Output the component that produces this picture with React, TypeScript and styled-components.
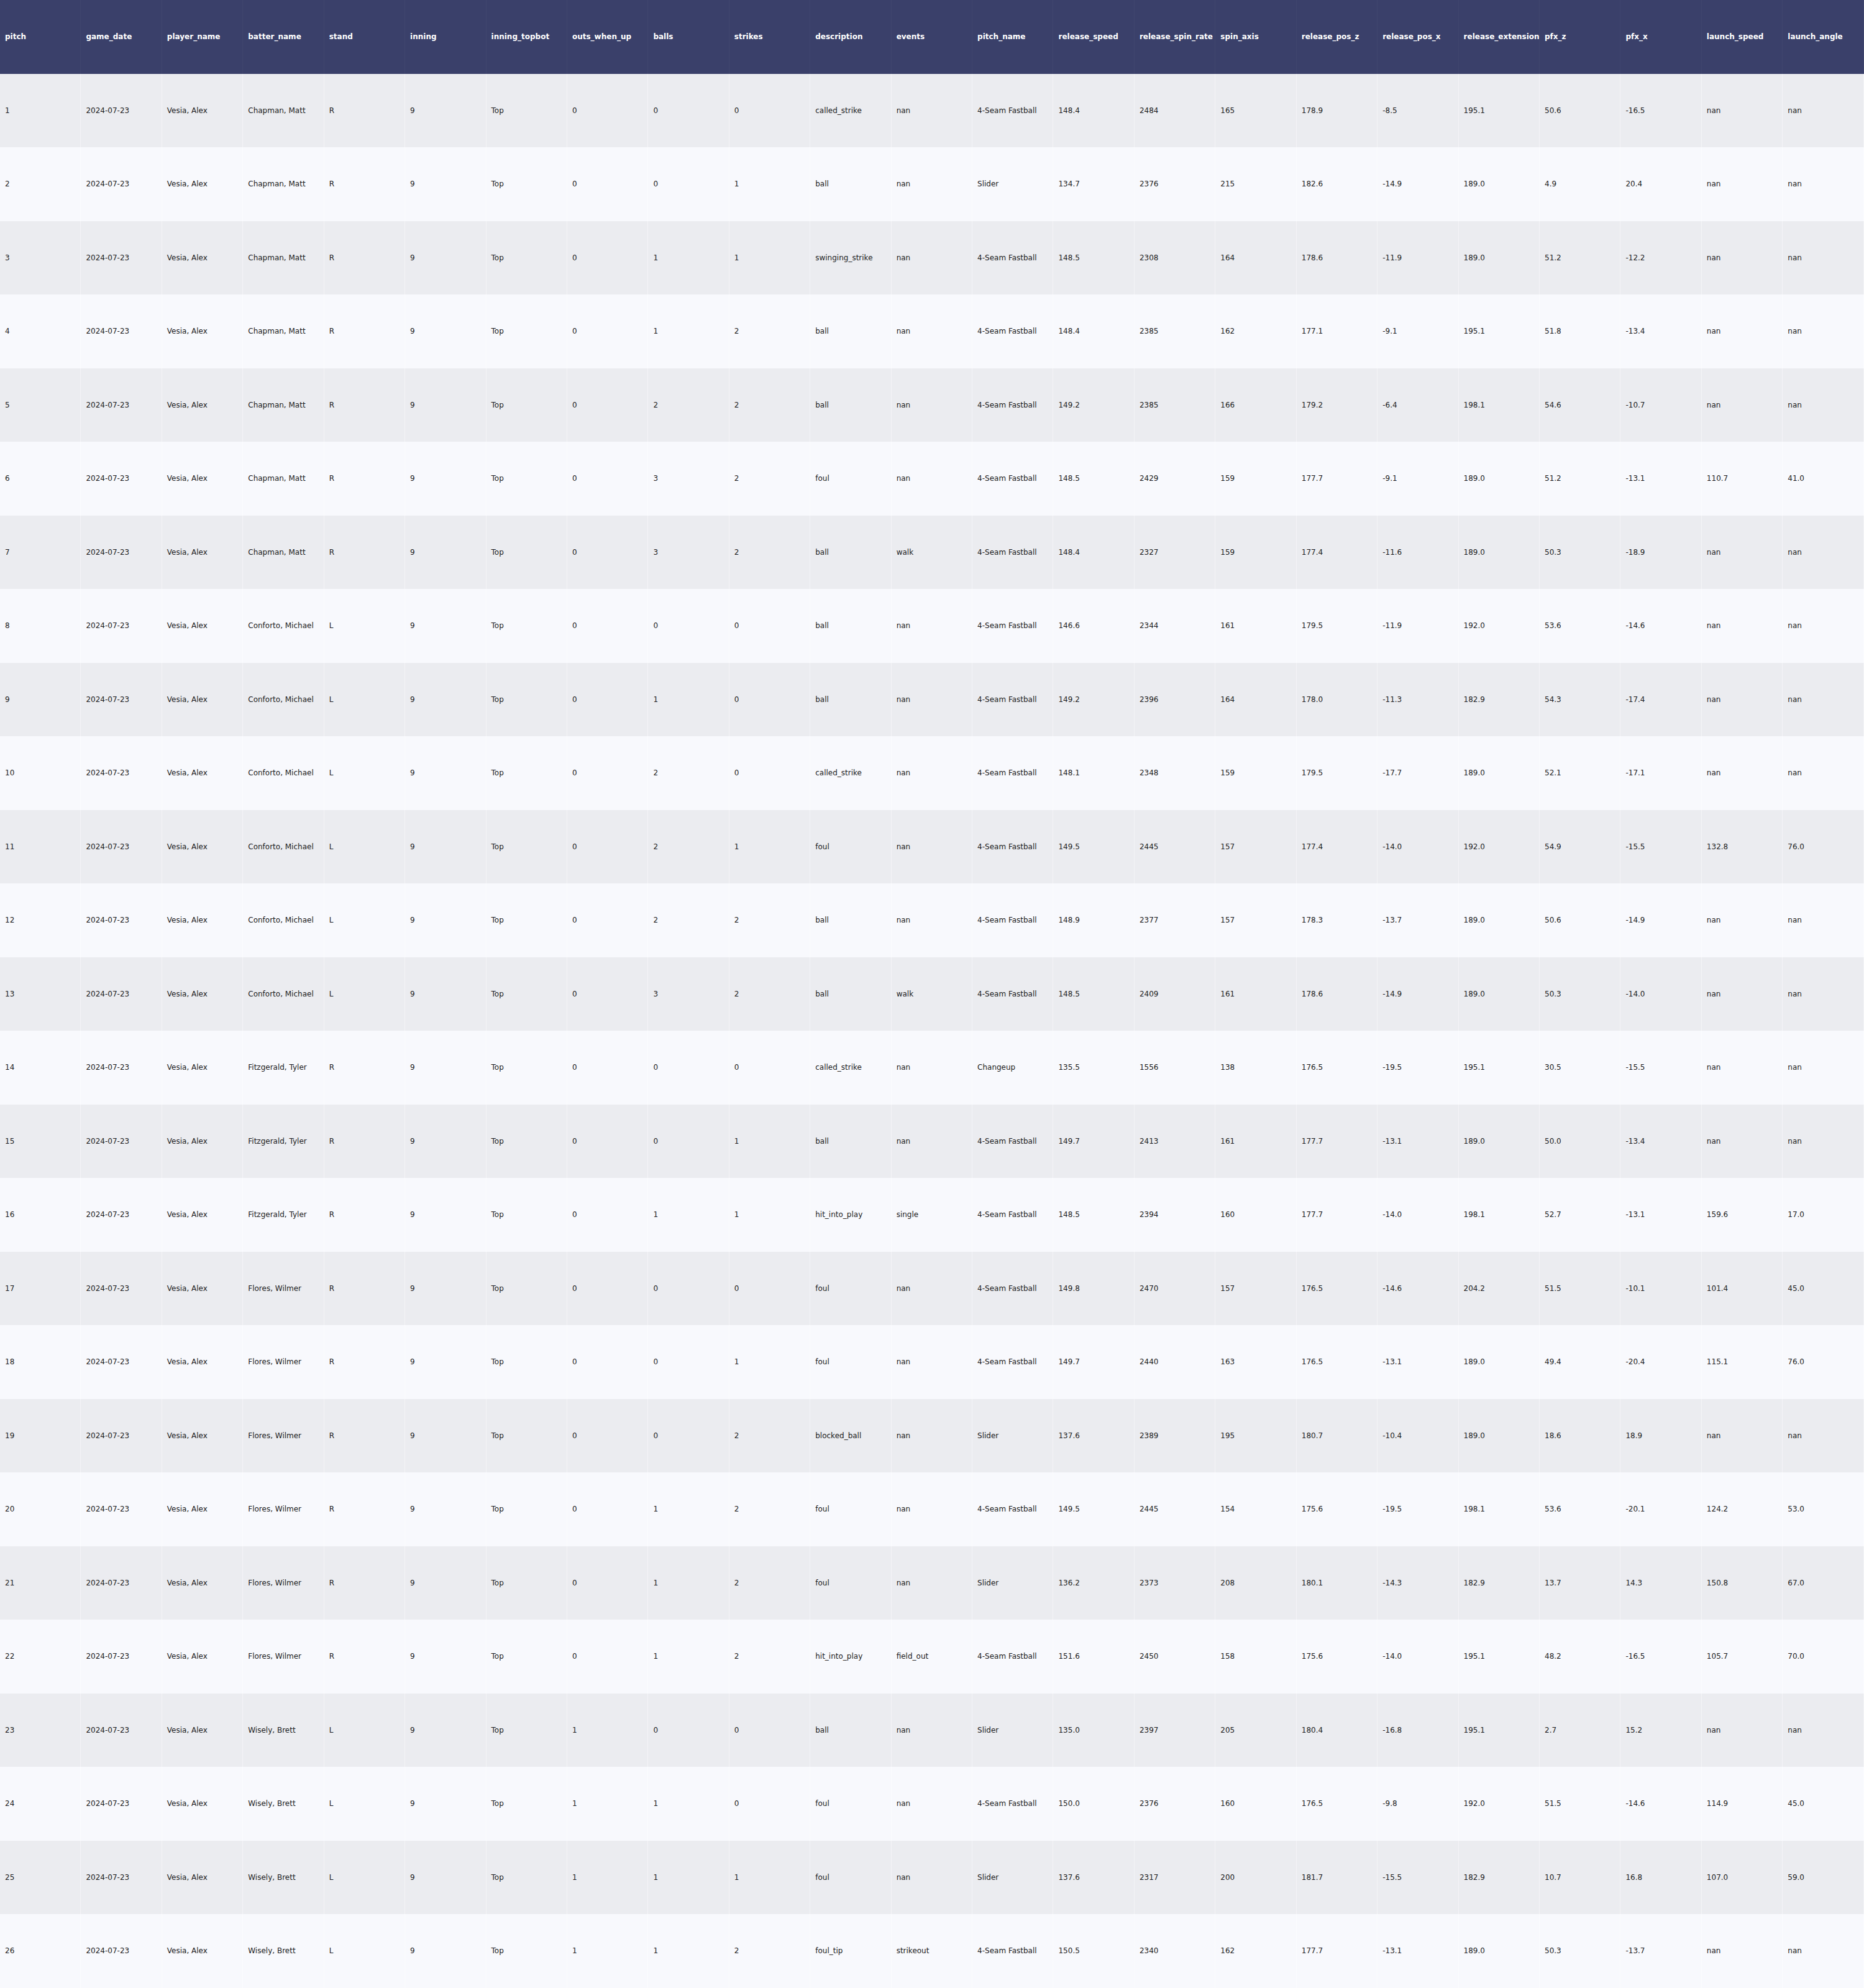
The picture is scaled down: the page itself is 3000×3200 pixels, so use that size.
import React from "react";
import styled, { createGlobalStyle } from "styled-components";

const GlobalStyle = createGlobalStyle`
  html, body {
    margin: 0;
    padding: 0;
    background: #f8f9fd;
  }
  body {
    font-family: "DejaVu Sans", Verdana, sans-serif;
  }
`;

const columns = [
  "pitch",
  "game_date",
  "player_name",
  "batter_name",
  "stand",
  "inning",
  "inning_topbot",
  "outs_when_up",
  "balls",
  "strikes",
  "description",
  "events",
  "pitch_name",
  "release_speed",
  "release_spin_rate",
  "spin_axis",
  "release_pos_z",
  "release_pos_x",
  "release_extension",
  "pfx_z",
  "pfx_x",
  "launch_speed",
  "launch_angle",
];

type Raw = [
  string, string, number, number, number, string, string, string,
  string, string, string, string, string, string, string, string, string, string
];

const FB = "4-Seam Fastball";
const CH = "Chapman, Matt";
const CO = "Conforto, Michael";
const FI = "Fitzgerald, Tyler";
const FL = "Flores, Wilmer";
const WI = "Wisely, Brett";

const raw: Raw[] = [
  [CH, "R", 0, 0, 0, "called_strike", "nan", FB, "148.4", "2484", "165", "178.9", "-8.5", "195.1", "50.6", "-16.5", "nan", "nan"],
  [CH, "R", 0, 0, 1, "ball", "nan", "Slider", "134.7", "2376", "215", "182.6", "-14.9", "189.0", "4.9", "20.4", "nan", "nan"],
  [CH, "R", 0, 1, 1, "swinging_strike", "nan", FB, "148.5", "2308", "164", "178.6", "-11.9", "189.0", "51.2", "-12.2", "nan", "nan"],
  [CH, "R", 0, 1, 2, "ball", "nan", FB, "148.4", "2385", "162", "177.1", "-9.1", "195.1", "51.8", "-13.4", "nan", "nan"],
  [CH, "R", 0, 2, 2, "ball", "nan", FB, "149.2", "2385", "166", "179.2", "-6.4", "198.1", "54.6", "-10.7", "nan", "nan"],
  [CH, "R", 0, 3, 2, "foul", "nan", FB, "148.5", "2429", "159", "177.7", "-9.1", "189.0", "51.2", "-13.1", "110.7", "41.0"],
  [CH, "R", 0, 3, 2, "ball", "walk", FB, "148.4", "2327", "159", "177.4", "-11.6", "189.0", "50.3", "-18.9", "nan", "nan"],
  [CO, "L", 0, 0, 0, "ball", "nan", FB, "146.6", "2344", "161", "179.5", "-11.9", "192.0", "53.6", "-14.6", "nan", "nan"],
  [CO, "L", 0, 1, 0, "ball", "nan", FB, "149.2", "2396", "164", "178.0", "-11.3", "182.9", "54.3", "-17.4", "nan", "nan"],
  [CO, "L", 0, 2, 0, "called_strike", "nan", FB, "148.1", "2348", "159", "179.5", "-17.7", "189.0", "52.1", "-17.1", "nan", "nan"],
  [CO, "L", 0, 2, 1, "foul", "nan", FB, "149.5", "2445", "157", "177.4", "-14.0", "192.0", "54.9", "-15.5", "132.8", "76.0"],
  [CO, "L", 0, 2, 2, "ball", "nan", FB, "148.9", "2377", "157", "178.3", "-13.7", "189.0", "50.6", "-14.9", "nan", "nan"],
  [CO, "L", 0, 3, 2, "ball", "walk", FB, "148.5", "2409", "161", "178.6", "-14.9", "189.0", "50.3", "-14.0", "nan", "nan"],
  [FI, "R", 0, 0, 0, "called_strike", "nan", "Changeup", "135.5", "1556", "138", "176.5", "-19.5", "195.1", "30.5", "-15.5", "nan", "nan"],
  [FI, "R", 0, 0, 1, "ball", "nan", FB, "149.7", "2413", "161", "177.7", "-13.1", "189.0", "50.0", "-13.4", "nan", "nan"],
  [FI, "R", 0, 1, 1, "hit_into_play", "single", FB, "148.5", "2394", "160", "177.7", "-14.0", "198.1", "52.7", "-13.1", "159.6", "17.0"],
  [FL, "R", 0, 0, 0, "foul", "nan", FB, "149.8", "2470", "157", "176.5", "-14.6", "204.2", "51.5", "-10.1", "101.4", "45.0"],
  [FL, "R", 0, 0, 1, "foul", "nan", FB, "149.7", "2440", "163", "176.5", "-13.1", "189.0", "49.4", "-20.4", "115.1", "76.0"],
  [FL, "R", 0, 0, 2, "blocked_ball", "nan", "Slider", "137.6", "2389", "195", "180.7", "-10.4", "189.0", "18.6", "18.9", "nan", "nan"],
  [FL, "R", 0, 1, 2, "foul", "nan", FB, "149.5", "2445", "154", "175.6", "-19.5", "198.1", "53.6", "-20.1", "124.2", "53.0"],
  [FL, "R", 0, 1, 2, "foul", "nan", "Slider", "136.2", "2373", "208", "180.1", "-14.3", "182.9", "13.7", "14.3", "150.8", "67.0"],
  [FL, "R", 0, 1, 2, "hit_into_play", "field_out", FB, "151.6", "2450", "158", "175.6", "-14.0", "195.1", "48.2", "-16.5", "105.7", "70.0"],
  [WI, "L", 1, 0, 0, "ball", "nan", "Slider", "135.0", "2397", "205", "180.4", "-16.8", "195.1", "2.7", "15.2", "nan", "nan"],
  [WI, "L", 1, 1, 0, "foul", "nan", FB, "150.0", "2376", "160", "176.5", "-9.8", "192.0", "51.5", "-14.6", "114.9", "45.0"],
  [WI, "L", 1, 1, 1, "foul", "nan", "Slider", "137.6", "2317", "200", "181.7", "-15.5", "182.9", "10.7", "16.8", "107.0", "59.0"],
  [WI, "L", 1, 1, 2, "foul_tip", "strikeout", FB, "150.5", "2340", "162", "177.7", "-13.1", "189.0", "50.3", "-13.7", "nan", "nan"],
];

const rows: string[][] = raw.map((r, i) => [
  String(i + 1),
  "2024-07-23",
  "Vesia, Alex",
  r[0],
  r[1],
  "9",
  "Top",
  String(r[2]),
  String(r[3]),
  String(r[4]),
  ...r.slice(5).map(String),
]);

const Table = styled.table`
  width: 3000px;
  table-layout: fixed;
  border-collapse: separate;
  border-spacing: 0;
  font-family: "DejaVu Sans", Verdana, sans-serif;
  font-size: 12px;
`;

const HeadRow = styled.tr`
  height: 118.5px;
  background: #3a406a;
`;

const HeadCell = styled.th`
  padding: 0 8px;
  text-align: left;
  vertical-align: middle;
  font-weight: 700;
  color: #ffffff;
  white-space: nowrap;
  overflow: hidden;
  border-right: 1px solid rgba(255, 255, 255, 0.03);
`;

const BodyRow = styled.tr<{ $odd: boolean }>`
  height: 118.5px;
  background: ${(p) => (p.$odd ? "#ebecf0" : "#f8f9fd")};
`;

const Cell = styled.td`
  padding: 0 8px;
  text-align: left;
  vertical-align: middle;
  color: #1c1c22;
  white-space: nowrap;
  overflow: hidden;
  border-right: 1px solid rgba(255, 255, 255, 0.45);
`;

export default function App() {
  return (
    <>
      <GlobalStyle />
      <Table>
        <thead>
          <HeadRow>
            {columns.map((c) => (
              <HeadCell key={c}>{c}</HeadCell>
            ))}
          </HeadRow>
        </thead>
        <tbody>
          {rows.map((row, i) => (
            <BodyRow key={i} $odd={i % 2 === 0}>
              {row.map((v, j) => (
                <Cell key={j}>{v}</Cell>
              ))}
            </BodyRow>
          ))}
        </tbody>
      </Table>
    </>
  );
}
